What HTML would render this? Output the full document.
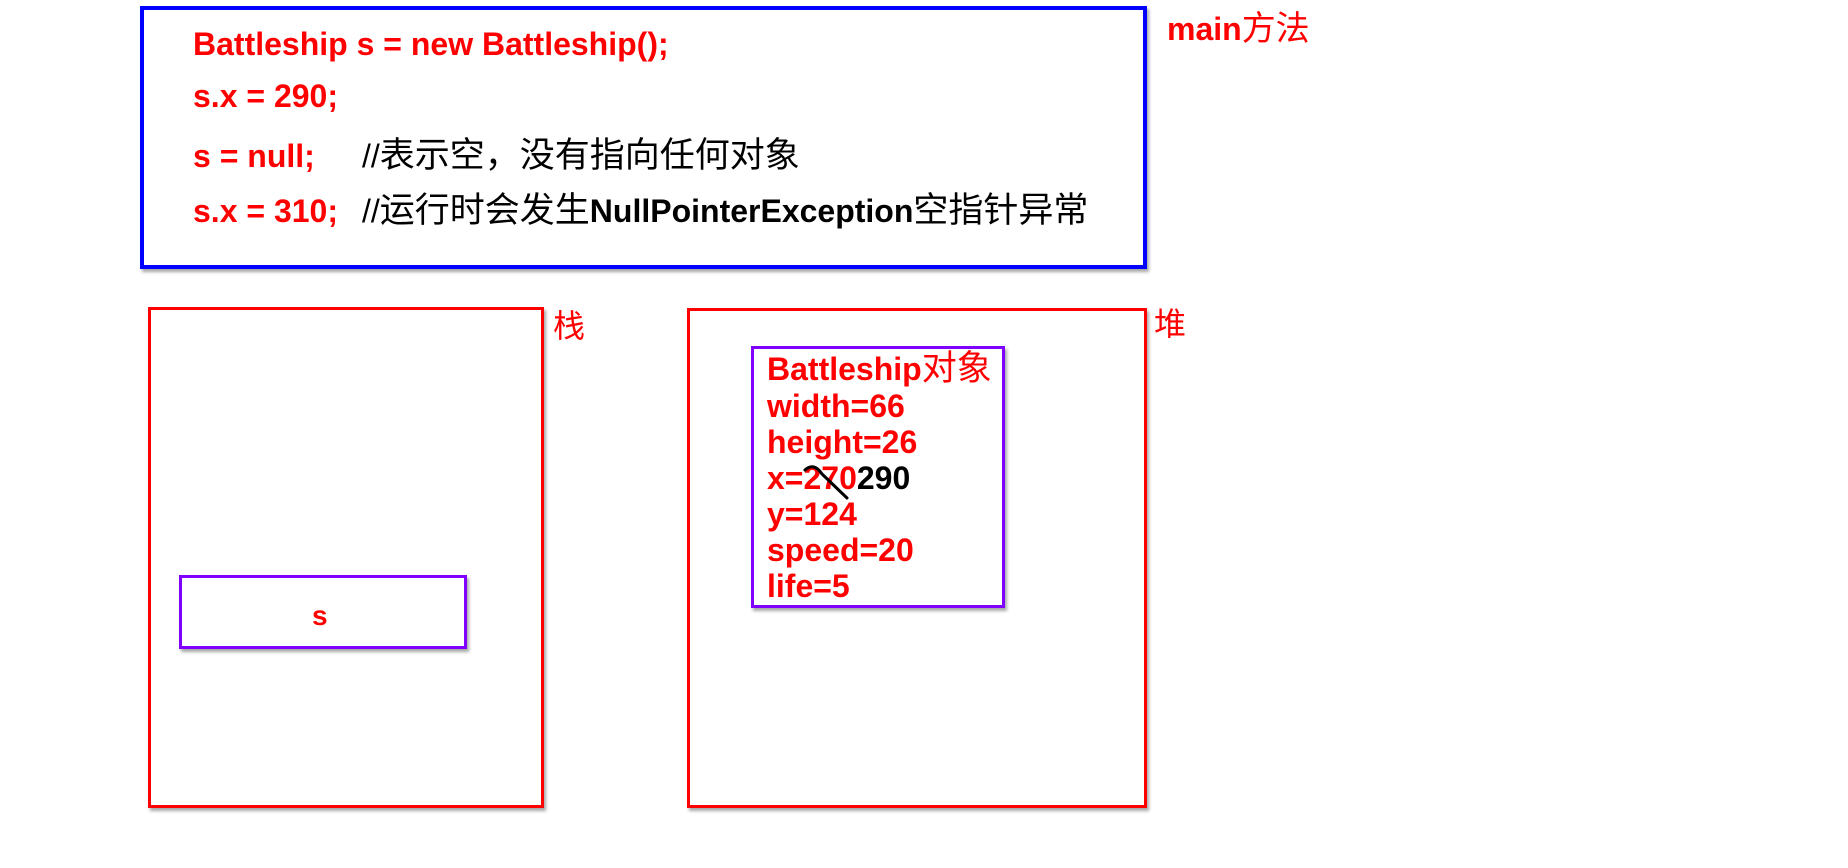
<!DOCTYPE html>
<html><head><meta charset="utf-8"><style>
html,body{margin:0;padding:0;background:#fff;width:1848px;height:868px;overflow:hidden;position:relative}
.b{position:absolute;box-sizing:border-box;box-shadow:2px 3px 3px rgba(0,0,0,.35)}
.t{position:absolute;white-space:nowrap;font-family:"Liberation Sans","Noto Sans CJK SC",sans-serif;font-size:32px;line-height:32px;font-weight:bold;color:#f00}
.n{font-weight:normal}
.c{font-weight:normal;font-size:35px}
.k{color:#000}
</style></head><body>
<div class="b" style="left:140px;top:6px;width:1007px;height:263px;border:4px solid #0000ff"></div>
<div class="t" style="left:193px;top:28px">Battleship s = new Battleship();</div>
<div class="t" style="left:193px;top:80px">s.x = 290;</div>
<div class="t" style="left:193px;top:140px">s = null;</div>
<div class="t k" style="left:362px;top:140px"><span class="n">//</span><span class="c">表示空，没有指向任何对象</span></div>
<div class="t" style="left:193px;top:195px">s.x = 310;</div>
<div class="t k" style="left:362px;top:195px"><span class="n">//</span><span class="c">运行时会发生</span>NullPointerException<span class="c">空指针异常</span></div>
<div class="t" style="left:1167px;top:13px">main<span class="n" style="font-size:34px">方法</span></div>

<div class="b" style="left:148px;top:307px;width:396px;height:501px;border:3px solid #f00"></div>
<div class="t n" style="left:553px;top:310px">栈</div>
<div class="b" style="left:179px;top:575px;width:288px;height:74px;border:3px solid #8000ff"></div>
<div class="t" style="left:312px;top:600px;font-size:28px">s</div>

<div class="b" style="left:687px;top:308px;width:460px;height:500px;border:3px solid #f00"></div>
<div class="t n" style="left:1154px;top:308px">堆</div>
<div class="b" style="left:751px;top:346px;width:254px;height:262px;border:3px solid #8000ff"></div>
<div class="t" style="left:767px;top:353px">Battleship<span class="n" style="font-size:35px">对象</span></div>
<div class="t" style="left:767px;top:390px">width=66</div>
<div class="t" style="left:767px;top:426px">height=26</div>
<div class="t" style="left:767px;top:462px">x=270<span class="k">290</span></div>
<div class="t" style="left:767px;top:498px">y=124</div>
<div class="t" style="left:767px;top:534px">speed=20</div>
<div class="t" style="left:767px;top:570px">life=5</div>
<svg style="position:absolute;left:0;top:0" width="1848" height="868"><path d="M805 470 Q814 462 822 474 L847 498" stroke="#000" stroke-width="3" fill="none" stroke-linecap="round"/></svg>
</body></html>
